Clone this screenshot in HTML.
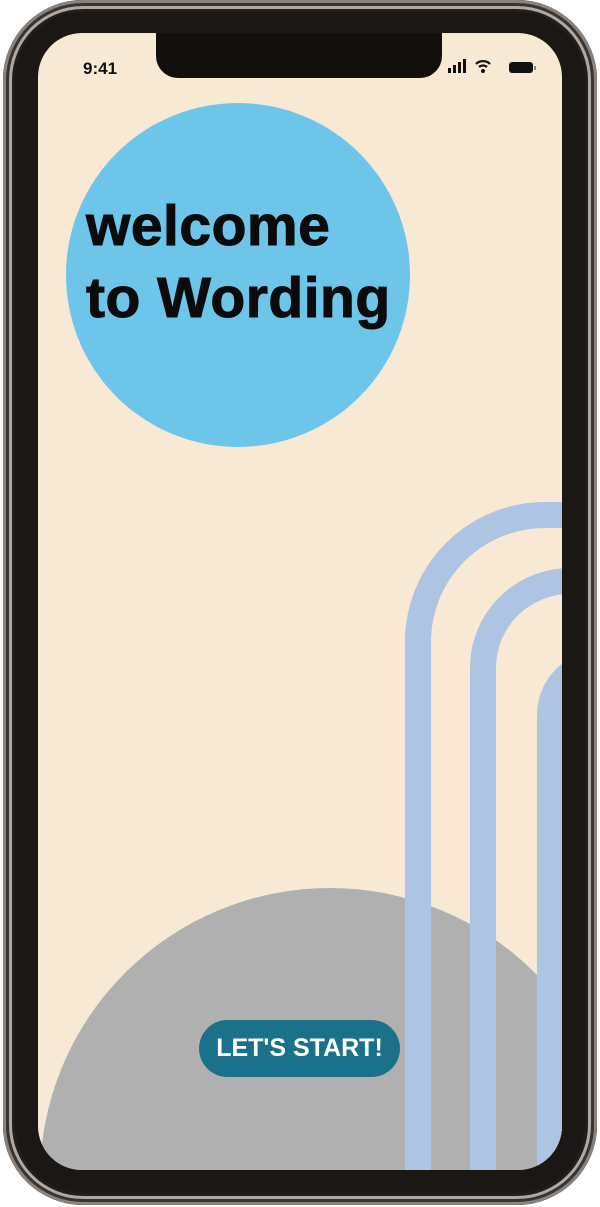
<!DOCTYPE html>
<html><head><meta charset="utf-8"><style>
html,body{margin:0;padding:0;background:#fff;width:600px;height:1207px;overflow:hidden;}
body{position:relative;font-family:"Liberation Sans",sans-serif;}
.phone{position:absolute;left:3px;top:0;width:594px;height:1205px;border-radius:80px;background:#1a1714;box-shadow:inset 0 0 0 3px #8a827c,inset 0 0 0 6px #3a3430,inset 0 0 0 9px #b0a8a2,inset 0 0 0 12px #221e1b;}
.screen{position:absolute;left:38px;top:33px;width:524px;height:1137px;border-radius:44px;background:#f8e9d4;overflow:hidden;}
.notch{position:absolute;left:118px;top:0;width:286px;height:45px;background:#120f0d;border-radius:0 0 22px 22px;}
.t{position:absolute;font-weight:bold;}
</style></head><body>
<div class="phone"></div>
<div class="screen">
<svg width="524" height="1137" style="position:absolute;left:0;top:0">
<circle cx="200" cy="242" r="172" fill="#6dc6e9"/>
<circle cx="292" cy="1145" r="290" fill="#b0b0b0"/>
<g fill="none" stroke="#adc4e2" stroke-width="26">
<path d="M380 1150 V609 A127 127 0 0 1 507 482 H560"/>
<path d="M445 1150 V635 A87 87 0 0 1 532 548 H560"/>
<path d="M512 1150 V682 A52 52 0 0 1 564 630"/>
</g>
</svg>
<div class="t" style="left:48px;top:157px;font-size:57px;letter-spacing:0.5px;color:#0b0b0b;line-height:72px;-webkit-text-stroke:1px #0b0b0b">welcome<br>to Wording</div>
<div style="position:absolute;left:161px;top:987px;width:201px;height:57px;border-radius:29px;background:#1c718a;color:#fff;font-weight:bold;font-size:25px;text-align:center;line-height:57px">LET'S START!</div>
<div class="notch"></div>
<div class="t" style="left:45px;top:26px;font-size:17px;color:#111">9:41</div>
<svg style="position:absolute;left:410px;top:25px" width="105" height="18">
<rect x="0" y="10" width="3" height="5" fill="#111"/><rect x="5" y="7" width="3" height="8" fill="#111"/><rect x="10" y="4" width="3" height="11" fill="#111"/><rect x="15" y="1" width="3" height="14" fill="#111"/>
<path d="M28 6 a10 10 0 0 1 14 0 M31 9 a6 6 0 0 1 8 0" stroke="#111" stroke-width="2.2" fill="none"/><circle cx="35" cy="13" r="2" fill="#111"/>
<rect x="61" y="4" width="24" height="11" rx="3" fill="#111"/><rect x="86" y="8" width="2" height="4" fill="#888"/>
</svg>
</div>
</body></html>
